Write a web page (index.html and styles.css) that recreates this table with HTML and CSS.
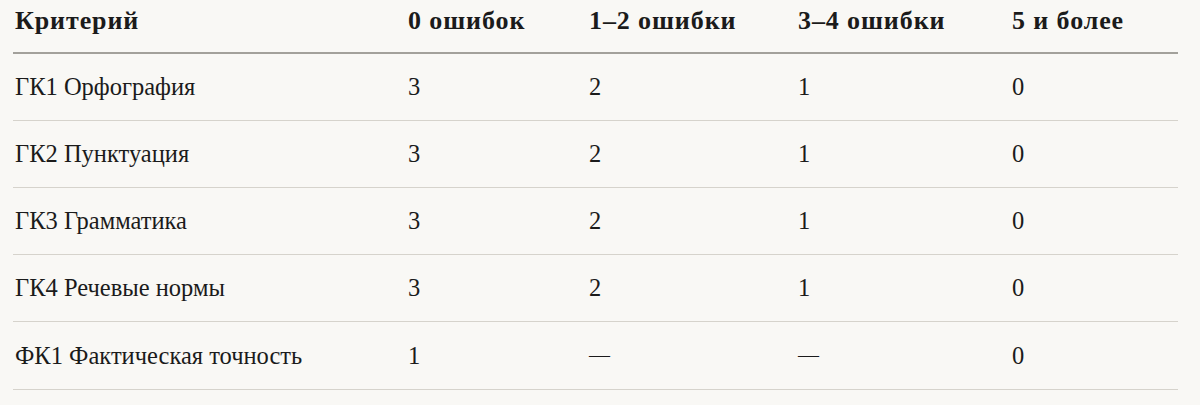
FILE: index.html
```html
<!DOCTYPE html>
<html lang="ru">
<head>
<meta charset="utf-8">
<link rel="stylesheet" href="styles.css">
</head>
<body>
<table class="grid">
  <colgroup>
    <col class="c1"><col class="c2"><col class="c3"><col class="c4"><col class="c5">
  </colgroup>
  <thead>
    <tr><th>Критерий</th><th>0 ошибок</th><th>1–2 ошибки</th><th>3–4 ошибки</th><th>5 и более</th></tr>
  </thead>
  <tbody>
    <tr><td>ГК1 Орфография</td><td>3</td><td>2</td><td>1</td><td>0</td></tr>
    <tr><td>ГК2 Пунктуация</td><td>3</td><td>2</td><td>1</td><td>0</td></tr>
    <tr><td>ГК3 Грамматика</td><td>3</td><td>2</td><td>1</td><td>0</td></tr>
    <tr><td>ГК4 Речевые нормы</td><td>3</td><td>2</td><td>1</td><td>0</td></tr>
    <tr><td>ФК1 Фактическая точность</td><td>1</td><td><span class="dash">—</span></td><td><span class="dash">—</span></td><td>0</td></tr>
  </tbody>
</table>
</body>
</html>
```

FILE: styles.css
```css
html, body {
  margin: 0;
  padding: 0;
  background: #f9f8f5;
}
body {
  font-family: "Liberation Serif", "Times New Roman", serif;
  color: #1b1b1b;
}
.grid {
  margin-left: 13px;
  width: 1165px;
  border-collapse: collapse;
  table-layout: fixed;
  font-size: 24.5px;
}
.c1 { width: 393px; }
.c2 { width: 181px; }
.c3 { width: 209px; }
.c4 { width: 214px; }
.c5 { width: 168px; }
.grid th {
  text-align: left;
  font-size: 26px;
  font-weight: 700;
  letter-spacing: 0.9px;
  line-height: 30px;
  padding: 6px 0 16px 2px;
  border-bottom: 2px solid #a3a19b;
}
.grid td {
  line-height: 30px;
  padding: 18px 0 18px 2px;
  border-bottom: 1px solid #d6d3cc;
}
.dash {
  font-size: 21px;
  vertical-align: 2px;
}
```
